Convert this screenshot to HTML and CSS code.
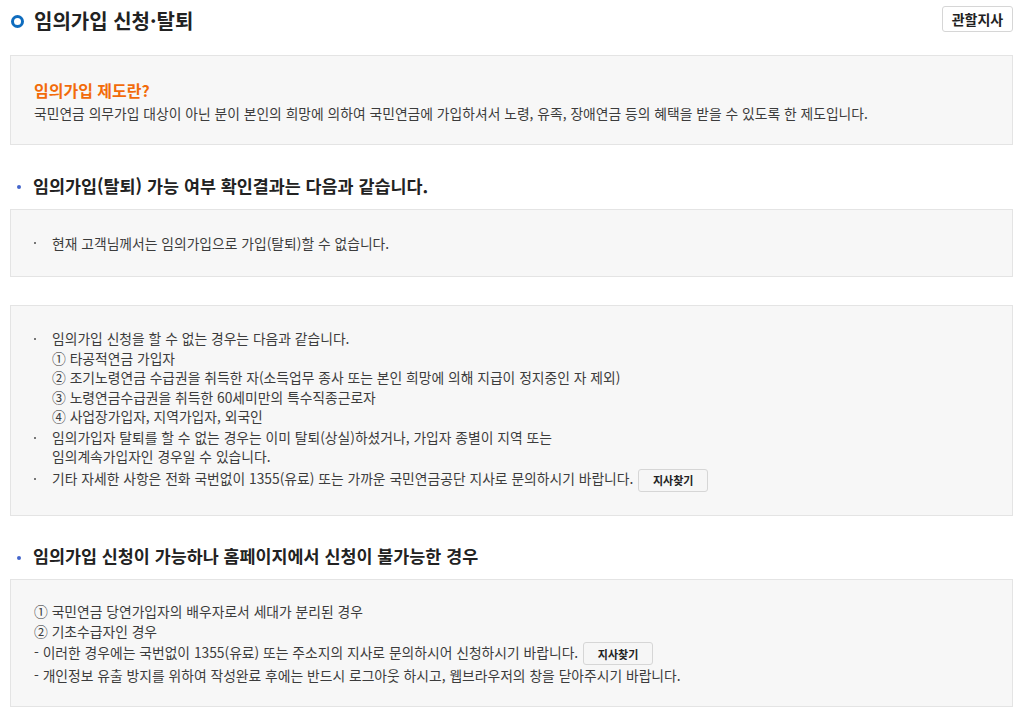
FILE: index.html
```html
<!DOCTYPE html>
<html lang="ko">
<head>
    <meta charset="utf-8">
    <title>임의가입 신청·탈퇴</title>
    <link rel="stylesheet" href="styles.css">
</head>
<body>
    <div class="page">
        <div class="title-row">
            <h1 class="title"><span class="ring"></span>임의가입 신청·탈퇴</h1>
            <button type="button" class="btn btn-office">관할지사</button>
        </div>

        <div class="box box-intro">
            <h3 class="intro-head">임의가입 제도란?</h3>
            <p>국민연금 의무가입 대상이 아닌 분이 본인의 희망에 의하여 국민연금에 가입하셔서 노령, 유족, 장애연금 등의 혜택을 받을 수 있도록 한 제도입니다.</p>
        </div>

        <h2 class="sub-title">임의가입(탈퇴) 가능 여부 확인결과는 다음과 같습니다.</h2>
        <div class="box">
            <ul class="dots">
                <li>현재 고객님께서는 임의가입으로 가입(탈퇴)할 수 없습니다.</li>
            </ul>
        </div>

        <div class="box box-notice">
            <ul class="dots">
                <li>임의가입 신청을 할 수 없는 경우는 다음과 같습니다.<br>
                    ① 타공적연금 가입자<br>
                    ② 조기노령연금 수급권을 취득한 자(소득업무 종사 또는 본인 희망에 의해 지급이 정지중인 자 제외)<br>
                    ③ 노령연금수급권을 취득한 60세미만의 특수직종근로자<br>
                    ④ 사업장가입자, 지역가입자, 외국인</li>
                <li>임의가입자 탈퇴를 할 수 없는 경우는 이미 탈퇴(상실)하셨거나, 가입자 종별이 지역 또는<br>
                    임의계속가입자인 경우일 수 있습니다.</li>
                <li class="with-btn">기타 자세한 사항은 전화 국번없이 1355(유료) 또는 가까운 국민연금공단 지사로 문의하시기 바랍니다. <button type="button" class="btn btn-find">지사찾기</button></li>
            </ul>
        </div>

        <h2 class="sub-title sub-title-last">임의가입 신청이 가능하나 홈페이지에서 신청이 불가능한 경우</h2>
        <div class="box box-cases">
            <p>① 국민연금 당연가입자의 배우자로서 세대가 분리된 경우</p>
            <p>② 기초수급자인 경우</p>
            <p class="with-btn">- 이러한 경우에는 국번없이 1355(유료) 또는 주소지의 지사로 문의하시어 신청하시기 바랍니다. <button type="button" class="btn btn-find">지사찾기</button></p>
            <p>- 개인정보 유출 방지를 위하여 작성완료 후에는 반드시 로그아웃 하시고, 웹브라우저의 창을 닫아주시기 바랍니다.</p>
        </div>
    </div>
</body>
</html>
```

FILE: styles.css
```css
html, body {
    box-sizing: border-box;
}

body {
    margin: 0;
    background: #fff;
    color: #3c3c3c;
    font-family: "Noto Sans CJK KR", "Noto Sans", sans-serif;
    font-size: 13.8px;
}

.page {
    padding: 0 8px 0 10px;
}

.title-row {
    display: flex;
    justify-content: space-between;
    align-items: flex-start;
    height: 55px;
}

.title {
    display: flex;
    align-items: center;
    margin: 0;
    padding-top: 8px;
    font-size: 20px;
    font-weight: bold;
    color: #222;
    line-height: 26px;
}

.ring {
    display: inline-block;
    box-sizing: border-box;
    width: 13px;
    height: 13px;
    margin: 0 10px 0 1px;
    border: 3.5px solid #0e6cbe;
    border-radius: 50%;
}

.btn {
    font-family: "Noto Sans CJK KR", "Noto Sans", sans-serif;
    font-weight: bold;
    color: #222;
    background: #fff;
    border: 1px solid #d6d6d6;
    border-radius: 3px;
    cursor: pointer;
}

.btn-office {
    margin-top: 6px;
    width: 71px;
    height: 26px;
    padding: 0;
    font-size: 14px;
}

.btn-find {
    width: 70px;
    height: 23px;
    padding: 0;
    margin-left: 1px;
    font-size: 11px;
    background: #f6f6f6;
    vertical-align: middle;
}

.box {
    background: #f7f7f7;
    border: 1px solid #e4e4e4;
    padding: 23px;
    line-height: 20px;
}

.box p {
    margin: 0;
}

.box-intro {
    padding-bottom: 21px;
}

.intro-head {
    margin: 0 0 2px;
    font-size: 16px;
    font-weight: bold;
    color: #f26b0a;
    line-height: 22px;
}

.sub-title {
    position: relative;
    margin: 0;
    padding: 29px 0 11px 23px;
    font-size: 17.4px;
    font-weight: bold;
    color: #222;
    line-height: 24px;
}

.sub-title::before {
    content: "";
    position: absolute;
    left: 7px;
    top: 40px;
    width: 4px;
    height: 4px;
    border-radius: 50%;
    background: #4466cc;
}

.sub-title-last {
    padding-top: 28px;
}

.dots {
    margin: 0;
    padding: 0;
    list-style: none;
}

.dots li {
    position: relative;
    padding-left: 18px;
}

.dots li::before {
    content: "";
    position: absolute;
    left: 0;
    top: 9px;
    width: 2px;
    height: 2px;
    background: #777;
}

.box-notice {
    margin-top: 28px;
    line-height: 19.5px;
}

.box-notice li + li {
    margin-top: 1px;
}

.box-notice .with-btn {
    margin-top: 2px;
}

.box-cases {
    padding-top: 21px;
    padding-bottom: 21px;
}

.box-cases .with-btn {
    line-height: 23px;
}
```
